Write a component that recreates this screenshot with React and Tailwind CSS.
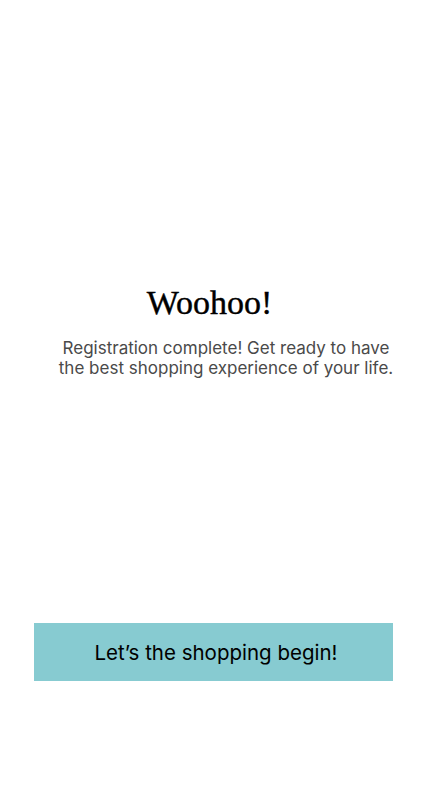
export default function App() {
  return (
    <div className="w-[423px] h-[791px] bg-white flex flex-col items-center" style={{ fontFamily: "Inter, 'Noto Sans', sans-serif" }}>
      <h1
        className="mt-[281px] text-[34px] leading-[44px] text-black pr-[4px]"
        style={{ fontFamily: "'Liberation Serif', serif", WebkitTextStroke: "0.4px black" }}
      >
        Woohoo!
      </h1>
      <p className="mt-[13px] pl-[29px] text-[17px] leading-[20px] text-[#4a4a4a] text-center">
        Registration complete! Get ready to have
        <br />
        the best shopping experience of your life.
      </p>
      <div className="flex-1" />
      <button className="mb-[110px] ml-[4px] w-[359px] h-[58px] bg-[#87cbd1] text-[20.5px] text-black flex items-center justify-center pl-[5px] pt-[2px]">
        Let’s the shopping begin!
      </button>
    </div>
  );
}
